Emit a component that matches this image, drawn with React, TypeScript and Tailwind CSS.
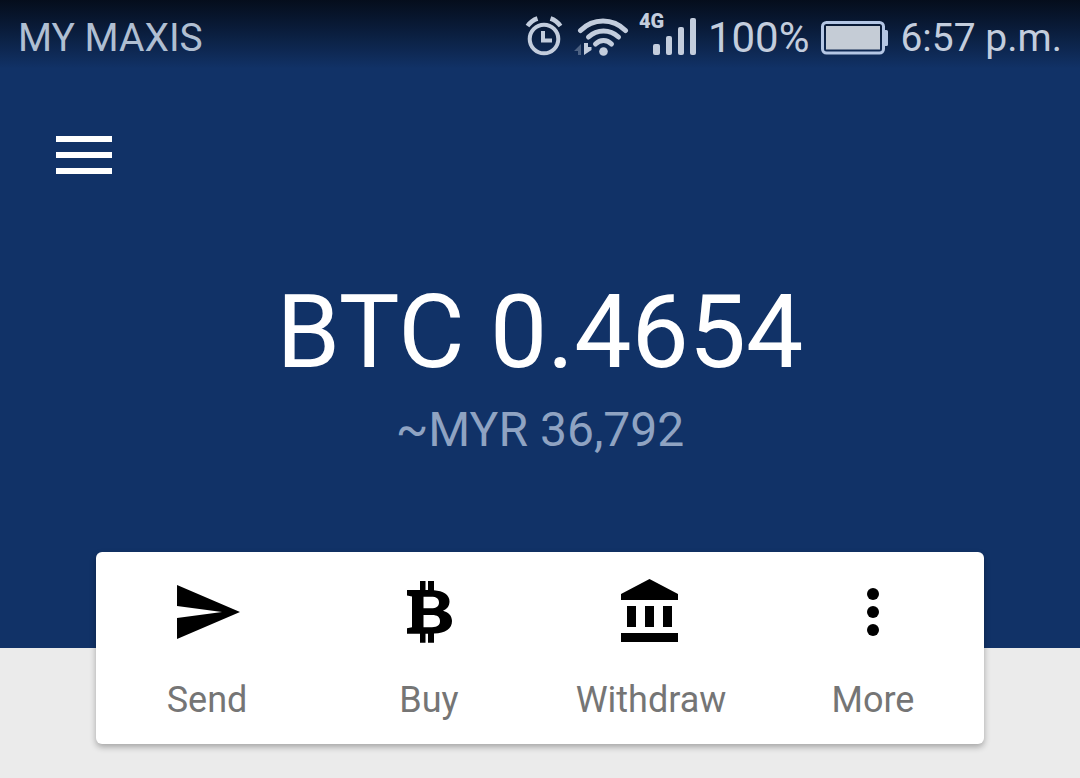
import React from 'react';

const AlarmIcon = () => (
    <svg width="38" height="42" viewBox="0 0 38 42" fill="none" stroke="currentColor" aria-hidden="true">
        <circle cx="19" cy="24" r="14.3" strokeWidth="4" />
        <path d="M18 16v9.500h9" strokeWidth="4" />
        <path d="M2.500 11Q6.500 5.500 12.500 3.500M25.500 3.500q6 2 10 7.500" strokeWidth="4.500" />
    </svg>
);

const WifiIcon = () => (
    <svg width="56" height="42" viewBox="0 0 56 42" fill="none" stroke="currentColor" strokeLinecap="round" aria-hidden="true">
        <path d="M7.500 15.500Q17 6 30 6t22.500 9.500" strokeWidth="5" />
        <path d="M15.500 22Q22 16 30.500 16T45.500 22" strokeWidth="5" />
        <path d="M22.500 29q3.500-3.500 8-3.500t8 3.500" strokeWidth="5" />
        <circle cx="30.500" cy="36.500" r="4.300" fill="currentColor" stroke="none" />
        <path d="M1 36l7-7v11H5v-4z" fill="currentColor" stroke="none" opacity="0.35" />
        <path d="M11 28h4v4h3.500v3L11 40z" fill="currentColor" stroke="none" />
    </svg>
);

const SignalIcon = () => (
    <svg width="59" height="42" viewBox="0 0 59 42" fill="currentColor" aria-hidden="true">
        <rect x="14" y="29" width="7" height="11" rx="2" />
        <rect x="27" y="21" width="6" height="19" rx="2" />
        <rect x="39" y="12" width="6" height="28" rx="2" />
        <rect x="51" y="3" width="6" height="37" rx="2" />
    </svg>
);

const BatteryIcon = () => (
    <svg width="67" height="34" viewBox="0 0 67 34" fill="none" aria-hidden="true">
        <rect x="1.500" y="1.500" width="61" height="30.500" rx="4" stroke="#b4c6e4" strokeWidth="3" />
        <rect x="5" y="5" width="54" height="23.500" fill="#c5ccd6" />
        <path d="M63 9h2.500a1.500 1.500 0 0 1 1.500 1.500v13a1.500 1.500 0 0 1-1.500 1.500H63z" fill="#b4c6e4" />
    </svg>
);

const SendIcon = () => (
    <svg className="size-18" viewBox="0 0 24 24" fill="currentColor" aria-hidden="true">
        <path d="M2.010 21L23 12 2.010 3 2 10l15 2-15 2z" />
    </svg>
);

const BitcoinIcon = () => (
    <svg className="size-18" viewBox="0 0 72 72" fill="currentColor" aria-hidden="true">
        <path
            fillRule="evenodd"
            d="M27 5h5.500v9H35V5h6v9.200C50 15 56.500 18.500 56.500 25.500c0 4.500-2.500 7.500-6.500 9.200 5.500 1.500 9 5 9 10.300 0 8-6.500 12-18 12.500v9.200h-6v-9h-2.500v9H27v-9H14V52.200l5-1V20.500l-5-1V14h13zM30.500 20.700v11.500h7.500c5.500 0 8-2 8-5.800 0-3.700-2.500-5.700-8-5.700zM30.500 39v12.300H39c5.500 0 8-2.200 8-6.200 0-4-2.500-6.100-8-6.100z"
        />
    </svg>
);

const BankIcon = () => (
    <svg className="size-18" viewBox="0 0 24 24" fill="currentColor" aria-hidden="true">
        <path d="M4 10v7h3v-7zM10 10v7h3v-7zM16 10v7h3v-7zM2 22h19v-3H2zM11.500 1L2 6v2h19V6z" />
    </svg>
);

const MoreIcon = () => (
    <svg className="size-18" viewBox="0 0 24 24" fill="currentColor" aria-hidden="true">
        <circle cx="12" cy="6" r="2" />
        <circle cx="12" cy="12" r="2" />
        <circle cx="12" cy="18" r="2" />
    </svg>
);

const actions = [
    { label: 'Send', Icon: SendIcon },
    { label: 'Buy', Icon: BitcoinIcon },
    { label: 'Withdraw', Icon: BankIcon },
    { label: 'More', Icon: MoreIcon },
];

const StatusBar: React.FC = () => (
    <div className="flex h-[76px] items-center justify-between bg-linear-to-b from-[#050d1c] to-[#113267] to-90% px-[18px] text-[39px] leading-none text-[#c3cddd]">
        <span className="text-[#b0bfd2]">MY MAXIS</span>
        <div className="flex items-center">
            <div className="mr-2.5 flex items-center gap-2.5 pb-1">
                <AlarmIcon />
                <WifiIcon />
                <div className="relative">
                    <SignalIcon />
                    <span className="absolute -top-1 left-0 text-xl leading-none font-black">4G</span>
                </div>
            </div>
            <span className="text-[42px]">100%</span>
            <div className="mx-3">
                <BatteryIcon />
            </div>
            <span>6:57 p.m.</span>
        </div>
    </div>
);

const App: React.FC = () => {
    return (
        <div className="min-h-screen bg-[#ebebeb] font-[Roboto,sans-serif]">
            <header className="bg-[#113267] pb-[180px]">
                <StatusBar />

                <div className="px-14 pt-[60px]">
                    <button type="button" aria-label="Menu" className="flex w-14 flex-col gap-2.5">
                        <span className="h-1.5 w-full bg-white" />
                        <span className="h-1.5 w-full bg-white" />
                        <span className="h-1.5 w-full bg-white" />
                    </button>
                </div>

                {/* Balance */}
                <div className="pt-[98px] text-center">
                    <h1 className="text-[102px] leading-[120px] text-white">BTC 0.4654</h1>
                    <p className="text-5xl leading-[76px] text-[#8fa3c2]">~MYR 36,792</p>
                </div>
            </header>

            {/* Quick actions */}
            <nav className="relative mx-24 -mt-24 grid grid-cols-4 rounded-md bg-white shadow-[0_3px_6px_rgba(0,0,0,0.3)]">
                {actions.map(({ label, Icon }) => (
                    <button key={label} type="button" className="flex flex-col items-center gap-7 pt-6 pb-5 text-black">
                        <Icon />
                        <span className="text-4xl leading-[48px] text-[#757575]">{label}</span>
                    </button>
                ))}
            </nav>
        </div>
    );
};

export default App;
